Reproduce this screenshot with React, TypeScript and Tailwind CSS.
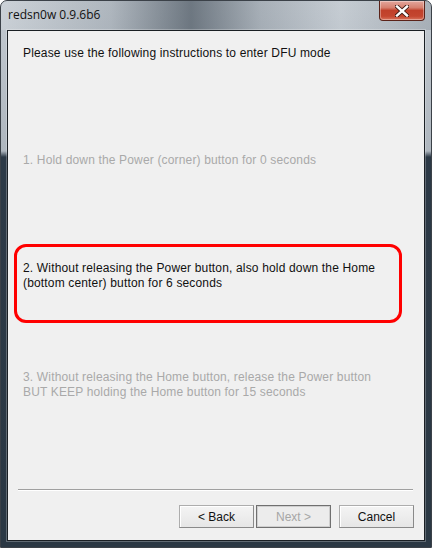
import { useState } from 'react';

const STEPS = [
    ['1. Hold down the Power (corner) button for 0 seconds'],
    ['2. Without releasing the Power button, also hold down the Home', '(bottom center) button for 6 seconds'],
    ['3. Without releasing the Home button, release the Power button', 'BUT KEEP holding the Home button for 15 seconds'],
];

function CloseButton() {
    return (
        <button className="flex h-[20px] w-[46px] items-center justify-center rounded-b-[4px] border border-t-0 border-[#5a2219] bg-[linear-gradient(to_bottom,#e3a79d_0%,#d6806f_35%,#c0402a_50%,#c4462f_80%,#d9735c_100%)] shadow-[inset_0_0_0_1px_rgba(255,255,255,0.35)]">
            <svg width="14" height="12" viewBox="0 0 14 12">
                <path d="M2 1.5 L12 10.5 M12 1.5 L2 10.5" stroke="#3a1a14" strokeWidth="4.2" strokeLinecap="square" />
                <path d="M2 1.5 L12 10.5 M12 1.5 L2 10.5" stroke="#ffffff" strokeWidth="2.4" strokeLinecap="square" />
            </svg>
        </button>
    );
}

function WizButton({ label, disabled, focused }: { label: string; disabled?: boolean; focused?: boolean }) {
    return (
        <button
            className={
                focused
                    ? 'flex h-[23px] w-[75px] items-center justify-center border border-[#707070] bg-[#ececec] text-[12px] text-[#a6a6a6] shadow-[inset_0_0_0_1px_#cfcfcf]'
                    : 'flex h-[23px] w-[75px] items-center justify-center border border-[#adadad] border-r-[#8a8a8a] border-b-[#8a8a8a] bg-[linear-gradient(to_bottom,#f4f4f4,#e6e6e6)] text-[12px] text-[#111] shadow-[inset_1px_1px_0_#ffffff]'
            }
            disabled={disabled}
        >
            {label}
        </button>
    );
}

function Lines({ lines, active }: { lines: string[]; active: boolean }) {
    return (
        <p className={active ? 'text-[12px] leading-[15px] tracking-[0.16px] text-[#111]' : 'text-[12px] leading-[15px] tracking-[0.16px] text-[#a9a9a9]'}>
            {lines.map((l) => (
                <span key={l} className="block whitespace-nowrap">
                    {l}
                </span>
            ))}
        </p>
    );
}

export default function App() {
    const [step] = useState(1);

    return (
        <div className="relative flex h-[548px] w-[432px] flex-col overflow-hidden rounded-t-[7px] border border-[#3b4148] bg-[linear-gradient(to_bottom,#c3cad1_0px,#aeb6be_150px,#2c3946_156px,#2b3844_100%)] font-['Liberation_Sans',sans-serif]">
            {/* aero streak across title bar */}
            <div className="flex h-[29px] shrink-0 items-start justify-between bg-[linear-gradient(to_right,rgba(255,255,255,0.15)_0px,rgba(60,72,84,0.15)_110px,rgba(40,52,64,0.55)_190px,rgba(60,72,84,0.2)_260px,rgba(255,255,255,0.05)_340px,rgba(90,100,110,0.25)_432px)]">
                <span className="mt-[6px] ml-[7px] font-['Open_Sans',sans-serif] text-[12px] leading-[15px] text-[#111]">
                    redsn0w 0.9.6b6
                </span>
                <div className="mr-[6px]">
                    <CloseButton />
                </div>
            </div>

            <div className="mx-[6px] flex flex-1 flex-col border border-[#1a1f24] bg-[#f0f0f0] shadow-[0_0_0_1px_rgba(255,255,255,0.25)]">
                <div className="mt-[15px] ml-[15px]">
                    <Lines lines={['Please use the following instructions to enter DFU mode']} active />
                </div>

                <div className="mt-[92px] ml-[15px]">
                    <Lines lines={STEPS[0]} active={step === 0} />
                </div>

                <div className="mt-[76px] ml-[6px] h-[79px] w-[388px] rounded-[12px] border-[3px] border-[#f00] pt-[14px] pl-[6px]">
                    <Lines lines={STEPS[1]} active={step === 1} />
                </div>

                <div className="mt-[47px] ml-[15px]">
                    <Lines lines={STEPS[2]} active={step === 2} />
                </div>

                <div className="mt-[89px] ml-[10px] h-[2px] w-[395px] border-t border-b border-t-[#a0a0a0] border-b-[#ffffff]" />

                <div className="mt-[14px] flex items-center">
                    <div className="ml-[171px] flex gap-[2px]">
                        <WizButton label="< Back" />
                        <WizButton label="Next >" disabled focused />
                    </div>
                    <div className="ml-[8px]">
                        <WizButton label="Cancel" />
                    </div>
                </div>
            </div>
            <div className="h-[6px] shrink-0" />
        </div>
    );
}
